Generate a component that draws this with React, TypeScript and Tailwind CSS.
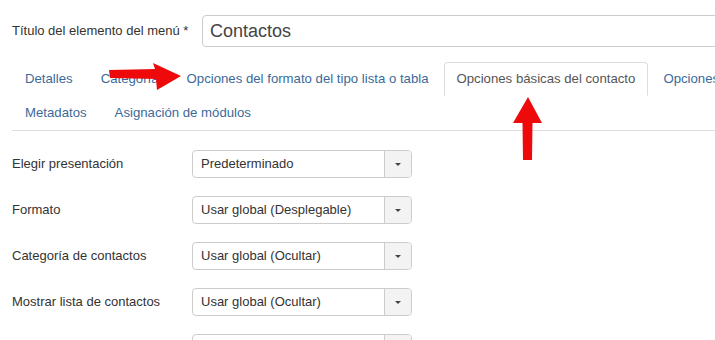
import React from "react";

const font = { fontFamily: '"Liberation Sans", Arial, sans-serif' };

function Select({ value }: { value: string }) {
  return (
    <div className="flex h-[28px] w-[220px] rounded-[4px] border border-[#cccccc] bg-white overflow-hidden">
      <div className="flex-1 flex items-center pl-[8px] text-[13px] text-[#333333]">{value}</div>
      <div className="w-[27px] flex items-center justify-center bg-[#f3f3f3] border-l border-[#cccccc]">
        <div className="w-0 h-0 border-l-[3px] border-r-[3px] border-t-[3px] border-l-transparent border-r-transparent border-t-[#444444]" />
      </div>
    </div>
  );
}

const rows = [
  ["Elegir presentación", "Predeterminado"],
  ["Formato", "Usar global (Desplegable)"],
  ["Categoría de contactos", "Usar global (Ocultar)"],
  ["Mostrar lista de contactos", "Usar global (Ocultar)"],
  ["Mostrar etiquetas", "Usar global (Ocultar)"],
];

const tabs = [
  "Detalles",
  "Categoría",
  "Opciones del formato del tipo lista o tabla",
  "Opciones básicas del contacto",
  "Opciones de formulario",
  "Metadatos",
  "Asignación de módulos",
];

export default function App() {
  return (
    <div className="relative w-[715px] h-[340px] overflow-hidden bg-white" style={font}>
      <div className="w-[900px] pl-[12px]">
        <div className="flex items-center pt-[15px] h-[47px]">
          <div className="w-[190px] text-[13px] text-[#333333]">Título del elemento del menú *</div>
          <div className="flex-1 h-[32px] rounded-[4px] border border-[#cccccc] flex items-center pl-[7px] text-[18px] text-[#444444]">
            Contactos
          </div>
        </div>
        <div className="mt-[15px] w-[830px] flex flex-wrap border-b border-[#dddddd]">
          {tabs.map((t) => {
            const active = t === "Opciones básicas del contacto";
            return (
              <div
                key={t}
                className={
                  "mr-[2px] h-[34px] px-[12px] flex items-center text-[13.2px] rounded-t-[4px] border " +
                  (active
                    ? "border-[#dddddd] border-b-transparent text-[#555555] bg-white"
                    : "border-transparent text-[#3b6a9a]")
                }
              >
                {t}
              </div>
            );
          })}
        </div>
        <div className="pt-[19px] flex flex-col gap-[18px]">
          {rows.map(([l, v], i) => (
            <div key={l} className="flex items-center h-[28px]">
              <div className="w-[180px] text-[13px] text-[#333333]">{i < 4 ? l : ""}</div>
              <Select value={v} />
            </div>
          ))}
        </div>
      </div>
      <svg className="absolute left-0 top-0 pointer-events-none" width="715" height="340">
        <polygon
          points="109,70 155,69 153,63 181,76 157,90 156,79 110,78"
          fill="#ee0a0a"
          strokeLinejoin="round"
        />
        <polygon
          points="528,97 542,123 532.5,123 532,160 523,160 522.5,123 513,123"
          fill="#ee0a0a"
        />
      </svg>
    </div>
  );
}
